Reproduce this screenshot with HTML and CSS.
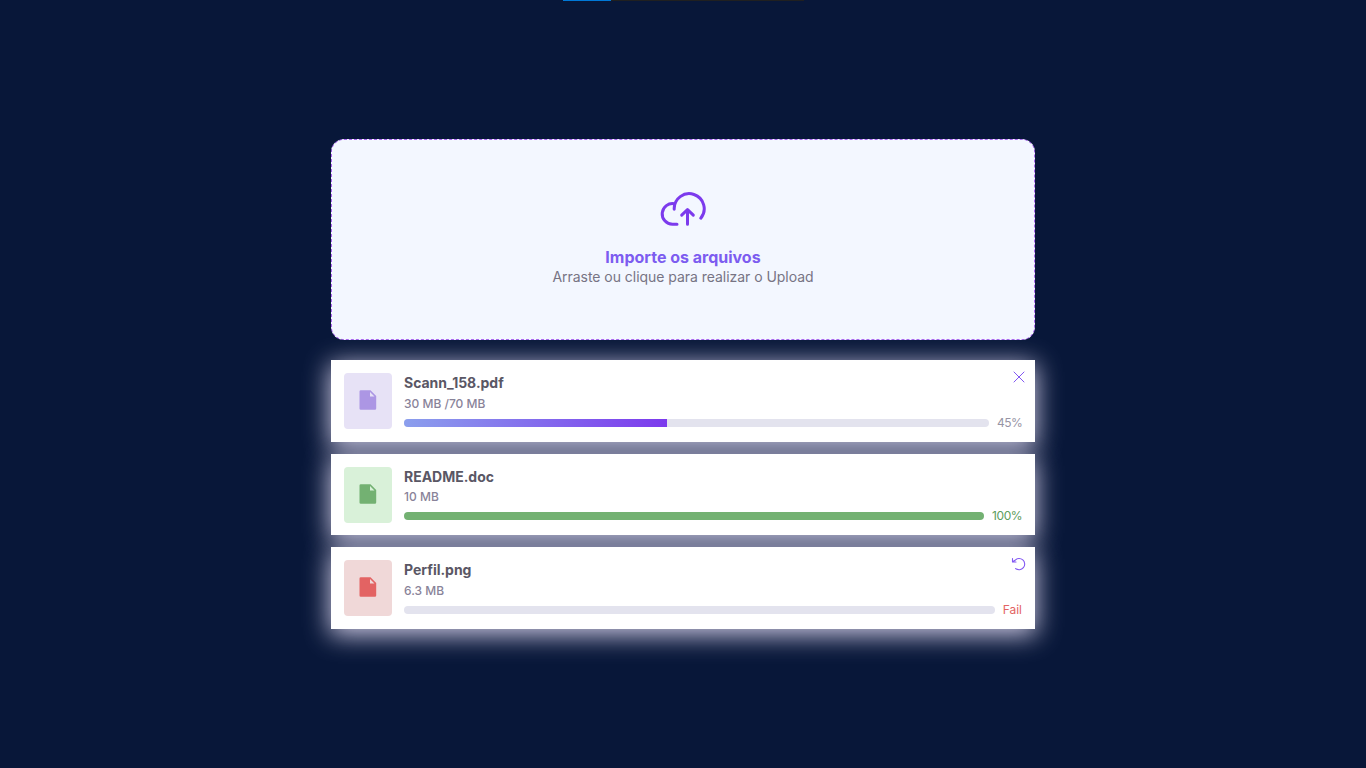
FILE: index.html
```html
<!DOCTYPE html>
<html lang="pt-BR">
<head>
<meta charset="utf-8">
<title>Upload</title>
<link rel="stylesheet" href="styles.css">
</head>
<body>
<div class="topline"><div class="topline-fill"></div></div>
<main class="uploader">
  <section class="dropzone">
    <svg class="cloud" width="48" height="36" viewBox="0 0 48 36" fill="none" stroke="#7c3aed" stroke-width="3" stroke-linecap="round" stroke-linejoin="round">
      <path d="M18 32.200h-4.500A10.300 10.300 0 1 1 15.500 11.800"/>
      <path d="M15.200 17.200A15 15 0 1 1 41.800 26.200"/>
      <path d="M28.500 32.200V17.800M22.700 23.200l5.800-5.600 5.800 5.600"/>
    </svg>
    <h1 class="dropzone-title">Importe os arquivos</h1>
    <p class="dropzone-text">Arraste ou clique para realizar o Upload</p>
  </section>
  <ul class="files">
    <li class="file loading">
      <div class="thumb"><svg width="18" height="20" viewBox="0 0 18 20" fill="currentColor"><path fill-rule="evenodd" d="M1.800.300h9.700L17.200 6v12.400a1.300 1.300 0 0 1-1.300 1.300H1.800A1.300 1.300 0 0 1 .500 18.400V1.600A1.300 1.300 0 0 1 1.800.300zM11 2v4.500h4.500z"/></svg></div>
      <div class="info">
        <h2 class="name">Scann_158.pdf</h2>
        <p class="size">30 MB /70 MB</p>
        <div class="status"><div class="track"><div class="bar" style="width:45%"></div></div><span class="percent">45%</span></div>
      </div>
      <svg class="action" width="14" height="14" viewBox="0 0 14 14" fill="none" stroke="#8257f2" stroke-linecap="round"><path d="M2 2l10 10M12 2L2 12"/></svg>
    </li>
    <li class="file done">
      <div class="thumb"><svg width="18" height="20" viewBox="0 0 18 20" fill="currentColor"><path fill-rule="evenodd" d="M1.800.300h9.700L17.200 6v12.400a1.300 1.300 0 0 1-1.300 1.300H1.800A1.300 1.300 0 0 1 .500 18.400V1.600A1.300 1.300 0 0 1 1.800.300zM11 2v4.500h4.500z"/></svg></div>
      <div class="info">
        <h2 class="name">README.doc</h2>
        <p class="size">10 MB</p>
        <div class="status"><div class="track"><div class="bar" style="width:100%"></div></div><span class="percent full">100%</span></div>
      </div>
    </li>
    <li class="file failed">
      <div class="thumb"><svg width="18" height="20" viewBox="0 0 18 20" fill="currentColor"><path fill-rule="evenodd" d="M1.800.300h9.700L17.200 6v12.400a1.300 1.300 0 0 1-1.300 1.300H1.800A1.300 1.300 0 0 1 .500 18.400V1.600A1.300 1.300 0 0 1 1.800.300zM11 2v4.500h4.500z"/></svg></div>
      <div class="info">
        <h2 class="name">Perfil.png</h2>
        <p class="size">6.3 MB</p>
        <div class="status"><div class="track"></div><span>Fail</span></div>
      </div>
      <svg class="action" width="14" height="14" viewBox="0 0 14 14" fill="none" stroke="#8257f2" stroke-width="1.100" stroke-linecap="round" stroke-linejoin="round"><path d="M.500 1.500v3.500h3.500M.700 4.800l2.300-1.500A5.600 5.600 0 1 1 3.600 11.500"/></svg>
    </li>
  </ul>
</main>
</body>
</html>
```
FILE: styles.css
```css
* { box-sizing: border-box; margin: 0; padding: 0; }
body {
  height: 100vh;
  overflow: hidden;
  background: #081739;
  font-family: Inter, "Liberation Sans", sans-serif;
}
.topline { width: 241px; height: 1px; margin-left: 563px; background: #202020; }
.topline-fill { width: 48px; height: 1px; background: #0078d7; }
.uploader { width: 704px; margin: 138px auto 0; }
.dropzone {
  display: flex;
  flex-direction: column;
  align-items: center;
  height: 201px;
  padding-top: 52px;
  border: 1px dashed #a967ee;
  border-radius: 13px;
  background: #f3f7ff;
}
.cloud { display: block; margin-bottom: 19px; }
.dropzone-title { color: #7c5cf0; font-size: 16px; font-weight: 700; line-height: 20px; }
.dropzone-text { color: #777484; font-size: 14px; line-height: 20px; letter-spacing: -0.040px; }
.files { position: relative; z-index: 0; display: grid; gap: 12px; margin-top: 20px; list-style: none; }
.file {
  position: relative;
  display: flex;
  gap: 12px;
  height: 81.600px;
  padding: 13px;
  background: #fff;
}
.file::before {
  content: "";
  position: absolute;
  z-index: -1;
  inset: 0;
  box-shadow: 0 5px 24px 1px #cecae3;
}
.thumb {
  display: flex;
  align-items: center;
  justify-content: center;
  width: 48px;
  height: 56px;
  padding-bottom: 1.500px;
  border-radius: 4px;
}
.info { flex: 1; }
.name { color: #5a5765; font-size: 14px; font-weight: 700; line-height: 20px; letter-spacing: -0.020px; }
.size { margin-top: 1.800px; color: #898399; font-size: 12px; font-weight: 500; line-height: 18px; }
.status { display: flex; align-items: center; gap: 8px; margin-top: 2px; font-size: 12px; line-height: 16px; }
.percent { letter-spacing: -0.550px; margin-right: -0.300px; }
.percent.full { letter-spacing: -0.350px; }
.track { flex: 1; height: 8px; overflow: hidden; border-radius: 4px; background: #e3e3ee; }
.bar { height: 8px; }
.action { position: absolute; top: 10px; right: 9px; overflow: visible; }
.loading .thumb { background: #e7e2f6; color: #ac96e4; }
.loading .bar { background: linear-gradient(90deg, #8b9fed, #7c3aed); }
.loading .status { color: #9794a5; }
.done .thumb { background: #d9f1d9; color: #73b172; }
.done .bar { background: #73b172; }
.done .status { color: #5c9d5c; }
.failed .thumb { background: #f0d8d8; color: #e36363; }
.failed .status { color: #e36363; }
```
